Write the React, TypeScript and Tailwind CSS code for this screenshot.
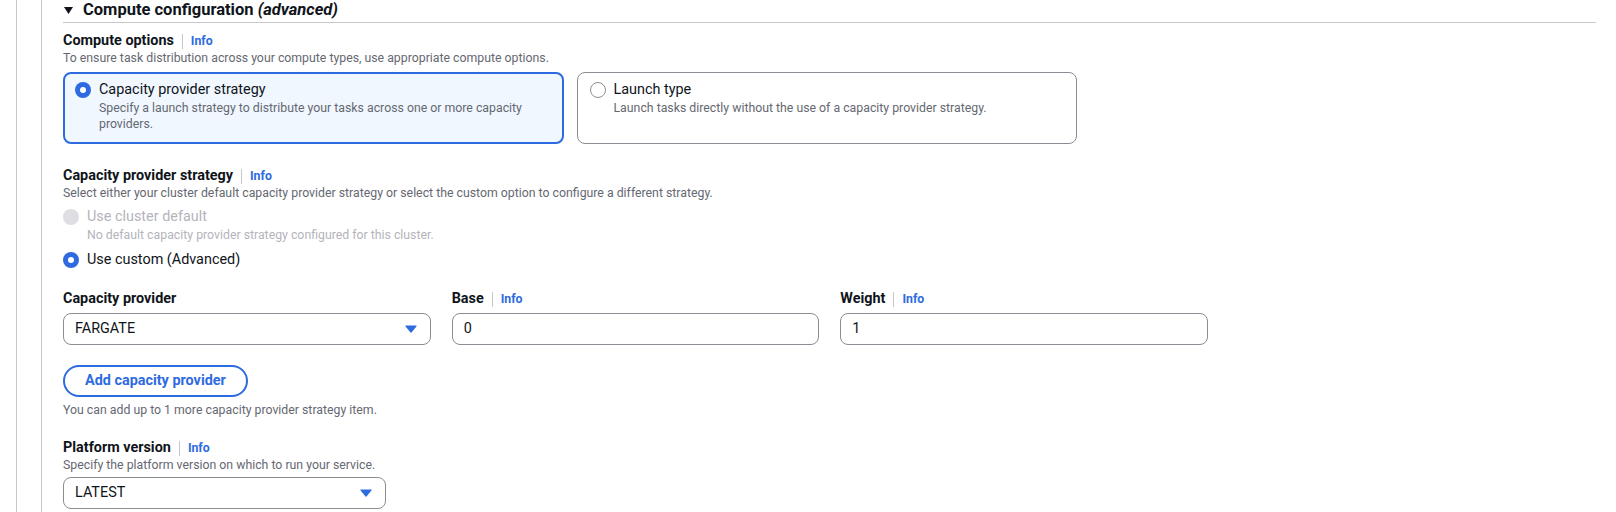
import React from "react";

const blueText = "text-[#2e6be0]";

function Info() {
  return (
    <>
      <span className="mx-2 h-[15px] w-px bg-[#c6c6cd]" />
      <a className={`text-[12.3px] font-bold leading-[18px] ${blueText}`}>Info</a>
    </>
  );
}

function FieldLabel({ text, info }: { text: string; info?: boolean }) {
  return (
    <div className="flex items-center">
      <span className="text-[14.4px] font-bold leading-[18px] text-[#0f141a]">{text}</span>
      {info && <Info />}
    </div>
  );
}

function Radio({ checked, disabled }: { checked?: boolean; disabled?: boolean }) {
  if (disabled) {
    return <span className="block h-4 w-4 shrink-0 rounded-full bg-[#dedee3]" />;
  }
  if (checked) {
    return (
      <span className="flex h-4 w-4 shrink-0 items-center justify-center rounded-full bg-[#2e6be0]">
        <span className="block h-[6px] w-[6px] rounded-full bg-white" />
      </span>
    );
  }
  return <span className="block h-4 w-4 shrink-0 rounded-full border-[1.5px] border-[#8c8c94] bg-white" />;
}

function Caret() {
  return (
    <svg width="12" height="8" viewBox="0 0 12 8" className="shrink-0">
      <path d="M1 1h10L6 7z" fill="#2e6be0" stroke="#2e6be0" strokeWidth="1.2" strokeLinejoin="round" />
    </svg>
  );
}

function Select({ value, className }: { value: string; className: string }) {
  return (
    <div
      className={`flex h-8 items-center justify-between rounded-lg border border-[#8c8c94] bg-white pl-[11px] pr-[13px] text-[14.4px] text-[#0f141a] ${className}`}
    >
      <span>{value}</span>
      <Caret />
    </div>
  );
}

function Input({ value }: { value: string }) {
  return (
    <div className="flex h-8 items-center rounded-lg border border-[#8c8c94] bg-white px-[11px] text-[14.4px] text-[#0f141a]">
      {value}
    </div>
  );
}

export default function App() {
  return (
    <div className="min-h-[512px] overflow-hidden bg-white font-['Roboto',sans-serif] text-[#0f141a]">
      <div className="ml-4 min-h-[512px] border-l border-[#c6c6cd]">
        <div className="ml-6 min-h-[512px] border-l border-[#c6c6cd] pl-[21px] pr-5">
          {/* section header */}
          <div className="border-b border-[#c6c6cd] pb-[2px]">
            <h2 className="flex items-center text-[16.5px] font-bold leading-5">
              <svg width="9" height="7" viewBox="0 0 9 7" className="ml-[1px] mr-[10px]">
                <path d="M0 0h9L4.5 7z" fill="#0f141a" />
              </svg>
              <span>
                Compute configuration <i>(advanced)</i>
              </span>
            </h2>
          </div>

          {/* compute options */}
          <div className="mt-[9px]">
            <FieldLabel text="Compute options" info />
            <p className="text-[12.3px] leading-4 text-[#656871]">
              To ensure task distribution across your compute types, use appropriate compute options.
            </p>
            <div className="mt-[6px] grid w-[1014px] grid-cols-2 gap-x-[13px]">
              <div className="flex gap-2 rounded-lg border-2 border-[#2e6be0] bg-[#f0f7ff] px-[10px] pb-[10px] pt-[6px]">
                <div className="flex h-5 items-center">
                  <Radio checked />
                </div>
                <div>
                  <div className="text-[14.4px] leading-5">Capacity provider strategy</div>
                  <div className="text-[12.3px] leading-4 text-[#656871]">
                    Specify a launch strategy to distribute your tasks across one or more capacity providers.
                  </div>
                </div>
              </div>
              <div className="flex gap-2 rounded-lg border border-[#8c8c94] bg-white px-[12px] pb-[11px] pt-[7px]">
                <div className="flex h-5 items-center">
                  <Radio />
                </div>
                <div>
                  <div className="text-[14.4px] leading-5">Launch type</div>
                  <div className="text-[12.3px] leading-4 text-[#656871]">
                    Launch tasks directly without the use of a capacity provider strategy.
                  </div>
                </div>
              </div>
            </div>
          </div>

          {/* capacity provider strategy */}
          <div className="mt-[23px]">
            <FieldLabel text="Capacity provider strategy" info />
            <p className="text-[12.3px] leading-4 text-[#656871]">
              Select either your cluster default capacity provider strategy or select the custom option to configure a
              different strategy.
            </p>
            <div className="mt-[6px] flex flex-col gap-[7px]">
              <div className="flex gap-2">
                <div className="flex h-5 items-center">
                  <Radio disabled />
                </div>
                <div>
                  <div className="text-[14.4px] leading-5 text-[#b4b4bb]">Use cluster default</div>
                  <div className="text-[12.3px] leading-4 text-[#b4b4bb]">
                    No default capacity provider strategy configured for this cluster.
                  </div>
                </div>
              </div>
              <div className="flex gap-2">
                <div className="flex h-5 items-center">
                  <Radio checked />
                </div>
                <div className="text-[14.4px] leading-5">Use custom (Advanced)</div>
              </div>
            </div>
          </div>

          {/* provider rows */}
          <div className="mt-[20px] grid w-[1145px] grid-cols-3 gap-x-[21px]">
            <div>
              <FieldLabel text="Capacity provider" />
              <div className="mt-[5px]">
                <Select value="FARGATE" className="w-full" />
              </div>
            </div>
            <div>
              <FieldLabel text="Base" info />
              <div className="mt-[5px]">
                <Input value="0" />
              </div>
            </div>
            <div>
              <FieldLabel text="Weight" info />
              <div className="mt-[5px]">
                <Input value="1" />
              </div>
            </div>
          </div>

          <button
            className={`mt-[20px] flex h-8 items-center rounded-full border-2 border-[#2e6be0] bg-white px-5 text-[14.4px] font-bold ${blueText}`}
          >
            Add capacity provider
          </button>
          <p className="mt-[5px] text-[12.3px] leading-4 text-[#656871]">
            You can add up to 1 more capacity provider strategy item.
          </p>

          {/* platform version */}
          <div className="mt-[21px]">
            <FieldLabel text="Platform version" info />
            <p className="text-[12.3px] leading-4 text-[#656871]">
              Specify the platform version on which to run your service.
            </p>
            <div className="mt-[4px]">
              <Select value="LATEST" className="w-[323px]" />
            </div>
          </div>
        </div>
      </div>
    </div>
  );
}
